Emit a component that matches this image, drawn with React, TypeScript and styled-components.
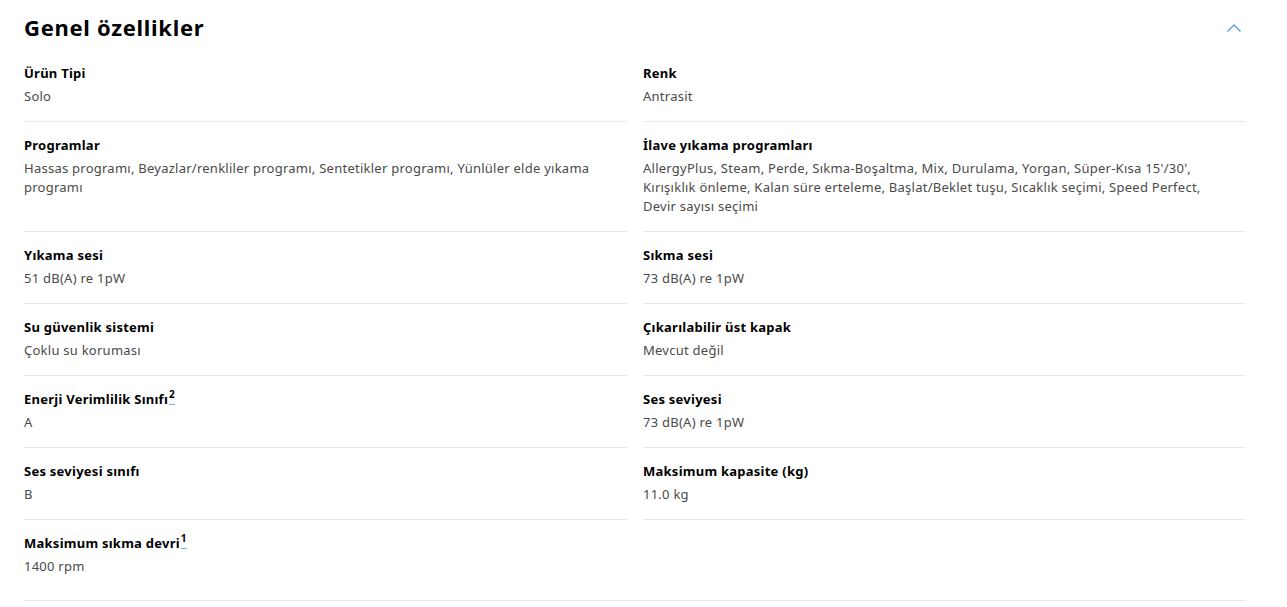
import React from "react";
import styled, { createGlobalStyle } from "styled-components";

const Global = createGlobalStyle`
  html, body { margin: 0; padding: 0; background: #fff; }
  body { font-family: "Noto Sans", "Open Sans", Arial, sans-serif; -webkit-font-smoothing: antialiased; }
`;

const Section = styled.section`
  padding: 0 41px 0 24px;
`;

const Header = styled.div`
  display: flex;
  align-items: flex-start;
  justify-content: space-between;
  padding-top: 13px;
  height: 37px;
  box-sizing: content-box;
`;

const Title = styled.h2`
  margin: 0;
  font-size: 22px;
  line-height: 28px;
  font-weight: 700;
  color: #000;
  letter-spacing: 0.7px;
`;

const Toggle = styled.button`
  border: 0;
  background: none;
  padding: 0;
  margin: 8px 4px 0 0;
  width: 16px;
  height: 14px;
  display: flex;
  align-items: center;
  justify-content: center;
  cursor: pointer;
`;

const Grid = styled.dl`
  margin: 0;
  display: grid;
  grid-template-columns: 1fr 1fr;
  column-gap: 16px;
  border-bottom: 1px solid #e6e8ea;
`;

const Item = styled.div`
  padding: 13px 0 15px;
  border-bottom: 1px solid #e6e8ea;
  &:last-child {
    border-bottom: none;
    padding-bottom: 24px;
  }
`;

const Label = styled.dt`
  font-size: 13px;
  line-height: 20px;
  font-weight: 700;
  color: #000;
  letter-spacing: 0.25px;
  margin-bottom: 4px;
`;

const Value = styled.dd`
  margin: 0;
  font-size: 13px;
  line-height: 19px;
  letter-spacing: 0.25px;
  color: #4a4a4a;
`;

const Note = styled.sup`
  font-size: 10px;
  line-height: 0;
  vertical-align: 6px;
  margin-left: 1px;
  padding-bottom: 3px;
  border-bottom: 1px solid #7aaedc;
  color: #000;
`;

type Spec = { label: string; value: string; note?: string };

const specs: Spec[] = [
  { label: "Ürün Tipi", value: "Solo" },
  { label: "Renk", value: "Antrasit" },
  {
    label: "Programlar",
    value:
      "Hassas programı, Beyazlar/renkliler programı, Sentetikler programı, Yünlüler elde yıkama programı",
  },
  {
    label: "İlave yıkama programları",
    value:
      "AllergyPlus, Steam, Perde, Sıkma-Boşaltma, Mix, Durulama, Yorgan, Süper-Kısa 15'/30', Kırışıklık önleme, Kalan süre erteleme, Başlat/Beklet tuşu, Sıcaklık seçimi, Speed Perfect, Devir\u00a0sayısı\u00a0seçimi",
  },
  { label: "Yıkama sesi", value: "51 dB(A) re 1pW" },
  { label: "Sıkma sesi", value: "73 dB(A) re 1pW" },
  { label: "Su güvenlik sistemi", value: "Çoklu su koruması" },
  { label: "Çıkarılabilir üst kapak", value: "Mevcut değil" },
  { label: "Enerji Verimlilik Sınıfı", value: "A", note: "2" },
  { label: "Ses seviyesi", value: "73 dB(A) re 1pW" },
  { label: "Ses seviyesi sınıfı", value: "B" },
  { label: "Maksimum kapasite (kg)", value: "11.0 kg" },
  { label: "Maksimum sıkma devri", value: "1400 rpm", note: "1" },
];

export default function App() {
  return (
    <>
      <Global />
      <Section>
        <Header>
          <Title>Genel özellikler</Title>
          <Toggle aria-label="Daralt">
            <svg width="16" height="10" viewBox="0 0 16 10" fill="none">
              <path d="M1.5 8.5 L8 2 L14.5 8.5" stroke="#5a9cd4" strokeWidth="1.4" />
            </svg>
          </Toggle>
        </Header>
        <Grid>
          {specs.map((s) => (
            <Item key={s.label}>
              <Label>
                {s.label}
                {s.note && <Note>{s.note}</Note>}
              </Label>
              <Value>{s.value}</Value>
            </Item>
          ))}
        </Grid>
      </Section>
    </>
  );
}
